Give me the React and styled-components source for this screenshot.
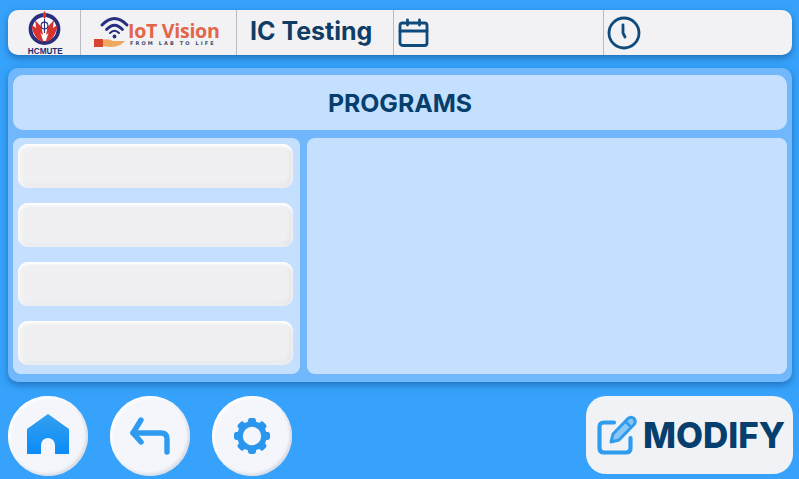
import React from "react";
import styled, { createGlobalStyle } from "styled-components";

const Global = createGlobalStyle`
  html, body { margin: 0; padding: 0; width: 799px; height: 479px; overflow: hidden; background: #36a2fb; }
  #root { width: 799px; height: 479px; }
  * { box-sizing: border-box; }
`;

const Page = styled.div`
  width: 799px;
  height: 479px;
  padding: 10px 7px 0 8px;
  display: flex;
  flex-direction: column;
  background: #36a2fb;
  font-family: Inter, "Liberation Sans", sans-serif;
  color: #0b3c68;
`;

const Header = styled.header`
  height: 45px;
  display: flex;
  flex: none;
  background: #f2f2f5;
  border-radius: 10px;
  box-shadow: 0 3px 7px rgba(12, 70, 125, 0.55);
`;

const Cell = styled.div`
  width: ${(p) => p.$w}px;
  flex: ${(p) => (p.$w ? "none" : "1")};
  display: flex;
  align-items: center;
  padding-left: ${(p) => p.$pad || 0}px;
  justify-content: ${(p) => (p.$center ? "center" : "flex-start")};
  border-right: ${(p) => (p.$last ? "none" : "1px solid #b9bcc2")};
`;

const CollegeLogo = styled.div`
  display: flex;
  flex-direction: column;
  align-items: center;
  margin-left: 2px;
`;

const CollegeName = styled.span`
  font: 700 9.5px/9px "Liberation Sans", sans-serif;
  color: #1d2a6e;
  transform: scaleX(0.86);
  margin-top: 1px;
`;

const VisionLogo = styled.div`
  position: relative;
  width: 126px;
  height: 36px;
  margin-left: 13px;
`;

const VisionWord = styled.span`
  position: absolute;
  left: 34px;
  top: 8px;
  font: 700 19.6px/15px "Open Sans", "Liberation Sans", sans-serif;
  letter-spacing: -0.3px;
  white-space: nowrap;
  color: #e2664a;
`;

const VisionTag = styled.span`
  position: absolute;
  left: 36px;
  top: 25px;
  font: 700 5px/6px "DejaVu Sans", sans-serif;
  letter-spacing: 2.1px;
  color: #3c4a6a;
  white-space: nowrap;
`;

const LogoArt = styled.svg`
  position: absolute;
  left: 0;
  top: 0;
`;

const AppTitle = styled.span`
  font-size: 25px;
  font-weight: 650;
  margin-bottom: 3px;
  color: #0f3d66;
`;

const Panel = styled.main`
  height: 314px;
  margin-top: 13px;
  flex: none;
  padding: 7px 5px 8px;
  display: flex;
  flex-direction: column;
  gap: 8px;
  background: #70b8fb;
  border-radius: 10px;
  box-shadow: 0 3px 7px rgba(12, 70, 125, 0.5);
`;

const TitleBar = styled.div`
  height: 55px;
  flex: none;
  display: flex;
  align-items: center;
  justify-content: center;
  background: #c5e0fe;
  border-radius: 10px;
  font-size: 24.8px;
  font-weight: 700;
  color: #063e6e;
`;

const Columns = styled.div`
  flex: 1;
  display: flex;
  gap: 7px;
  min-height: 0;
`;

const ListPane = styled.div`
  width: 287px;
  padding: 6px 7px 9px 5px;
  display: flex;
  flex-direction: column;
  justify-content: space-between;
  background: #c5e0fe;
  border-radius: 8px;
`;

const ListItem = styled.div`
  height: 44px;
  border-radius: 10px;
  background: #f0f0f2;
  box-shadow: inset 0 2px 3px #ffffff, inset 2px 0 4px #f9f9fb, inset -3px -3px 4px #e4e5ea;
`;

const DetailPane = styled.div`
  flex: 1;
  background: #c5e0fe;
  border-radius: 8px;
`;

const Footer = styled.footer`
  margin-top: 14px;
  display: flex;
  align-items: flex-start;
  gap: 22px;
`;

const RoundButton = styled.button`
  width: 80px;
  height: 80px;
  padding: 0;
  display: flex;
  align-items: center;
  justify-content: center;
  border: none;
  border-radius: 50%;
  background: #f4f6fc;
  box-shadow: inset -2px -2px 3px #d8dbe4, inset 2px 2px 3px #ffffff;
`;

const ModifyButton = styled.button`
  width: 207px;
  height: 78px;
  margin-left: auto;
  margin-right: -1px;
  padding: 0 0 0 10px;
  display: flex;
  align-items: center;
  gap: 5px;
  border: none;
  border-radius: 20px;
  background: #f1f2f6;
  font-family: Inter, "Liberation Sans", sans-serif;
  font-size: 35px;
  font-weight: 800;
  color: #063e6e;
`;

const CollegeArt = () => (
  <svg width="33" height="34" viewBox="0 0 33 34">
    <circle cx="16.5" cy="18" r="14" fill="#fff" stroke="#28307c" strokeWidth="3.8" />
    <path d="M3.5 14 L11.5 19 L15.5 31 Q6 29 3.5 14Z M29.5 14 L21.5 19 L17.5 31 Q27 29 29.5 14Z" fill="#d8332f" />
    <path d="M7 9 L13.5 16 L15 24 L8.5 19Z M26 9 L19.5 16 L18 24 L24.5 19Z" fill="#d8332f" />
    <path d="M16.5 0 Q20 4 16.5 8 Q13 4 16.5 0Z" fill="#d8332f" />
    <circle cx="16.5" cy="14.5" r="3.4" fill="#fff" stroke="#28307c" strokeWidth="1.1" />
    <path d="M16.5 8 V22" stroke="#28307c" strokeWidth="1.1" />
  </svg>
);

const VisionArt = () => (
  <LogoArt width="36" height="36" viewBox="0 0 36 36" fill="none">
    <path d="M8 10 Q20.5 -3 33 10" stroke="#262f80" strokeWidth="3" strokeLinecap="round" />
    <path d="M12.5 14.5 Q20.5 6 28.5 14.5" stroke="#262f80" strokeWidth="2.8" strokeLinecap="round" />
    <path d="M16 18 Q20.5 13.5 25 18" stroke="#262f80" strokeWidth="2" strokeLinecap="round" />
    <circle cx="20.5" cy="21.5" r="1.9" fill="#262f80" />
    <rect x="0" y="24" width="9" height="8" fill="#d8452f" />
    <path d="M9 25 Q14 23 19 26 L31 26 Q26 32 16 32 L9 31Z" fill="#f0a860" />
  </LogoArt>
);

const CalendarIcon = () => (
  <svg width="31" height="30" viewBox="0 0 31 30" fill="none" stroke="#0f4a7c" strokeWidth="2.8" strokeLinecap="round" strokeLinejoin="round">
    <rect x="2" y="5" width="27" height="22.5" rx="2.5" />
    <path d="M2 13 H29 M9.5 2 V7 M21.5 2 V7" />
  </svg>
);

const ClockIcon = () => (
  <svg width="34" height="34" viewBox="0 0 34 34" fill="none" stroke="#0f4a7c" strokeWidth="2.8" strokeLinecap="round" strokeLinejoin="round">
    <circle cx="17" cy="17" r="15" />
    <path d="M16 9 V17 L18 21" />
  </svg>
);

const HomeIcon = () => (
  <svg width="42" height="44" viewBox="0 0 42 44">
    <defs>
      <linearGradient id="homeFill" x1="0" y1="0" x2="0" y2="1">
        <stop offset="0" stopColor="#35a0ee" />
        <stop offset="1" stopColor="#0a8cf8" />
      </linearGradient>
    </defs>
    <path d="M21 0 L42 15 V40 H28 V31 A7 7 0 0 0 14 31 V40 H0 V15Z" fill="url(#homeFill)" />
  </svg>
);

const BackIcon = () => (
  <svg width="44" height="40" viewBox="0 0 44 40" fill="none" stroke="#2e9bf0" strokeWidth="5.4" strokeLinecap="round" strokeLinejoin="round">
    <path d="M13 4 L5 17 L13 26" />
    <path d="M5 17 H33 Q39 17 39 23 V36" />
  </svg>
);

const teeth = [0, 45, 90, 135, 180, 225, 270, 315];

const GearIcon = () => (
  <svg width="38" height="38" viewBox="-19 -19 38 38">
    <circle r="12" fill="none" stroke="#2a96ee" strokeWidth="5.6" />
    {teeth.map((a) => (
      <rect key={a} x="-4" y="-18" width="8" height="6" rx="2.4" fill="#2a96ee" transform={`rotate(${a})`} />
    ))}
  </svg>
);

const EditIcon = () => (
  <svg width="42" height="42" viewBox="0 0 42 42" fill="none" strokeLinecap="round" strokeLinejoin="round">
    <path d="M18 8.5 H8 Q3.5 8.5 3.5 13 V34 Q3.5 38.5 8 38.5 H30 Q34.5 38.5 34.5 34 V24" stroke="#2f9cee" strokeWidth="4.2" />
    <path d="M15 28 L17 20 L32 4.5 Q35 2 38 4.5 Q40.5 7.5 38 10.5 L23 26Z" fill="#8cc6f5" stroke="#2f9cee" strokeWidth="3" />
    <path d="M29.5 7.5 L35 13" stroke="#2f9cee" strokeWidth="2.6" />
  </svg>
);

export default function App() {
  return (
    <Page>
      <Global />
      <Header>
        <Cell $w={73} $center>
          <CollegeLogo>
            <CollegeArt />
            <CollegeName>HCMUTE</CollegeName>
          </CollegeLogo>
        </Cell>
        <Cell $w={156}>
          <VisionLogo>
            <VisionArt />
            <VisionWord>IoT Vision</VisionWord>
            <VisionTag>FROM LAB TO LIFE</VisionTag>
          </VisionLogo>
        </Cell>
        <Cell $w={157} $pad={13}>
          <AppTitle>IC Testing</AppTitle>
        </Cell>
        <Cell $w={210} $pad={4}>
          <CalendarIcon />
        </Cell>
        <Cell $pad={3} $last>
          <ClockIcon />
        </Cell>
      </Header>
      <Panel>
        <TitleBar>PROGRAMS</TitleBar>
        <Columns>
          <ListPane>
            <ListItem />
            <ListItem />
            <ListItem />
            <ListItem />
          </ListPane>
          <DetailPane />
        </Columns>
      </Panel>
      <Footer>
        <RoundButton aria-label="Home"><HomeIcon /></RoundButton>
        <RoundButton aria-label="Back"><BackIcon /></RoundButton>
        <RoundButton aria-label="Settings"><GearIcon /></RoundButton>
        <ModifyButton><EditIcon />MODIFY</ModifyButton>
      </Footer>
    </Page>
  );
}
